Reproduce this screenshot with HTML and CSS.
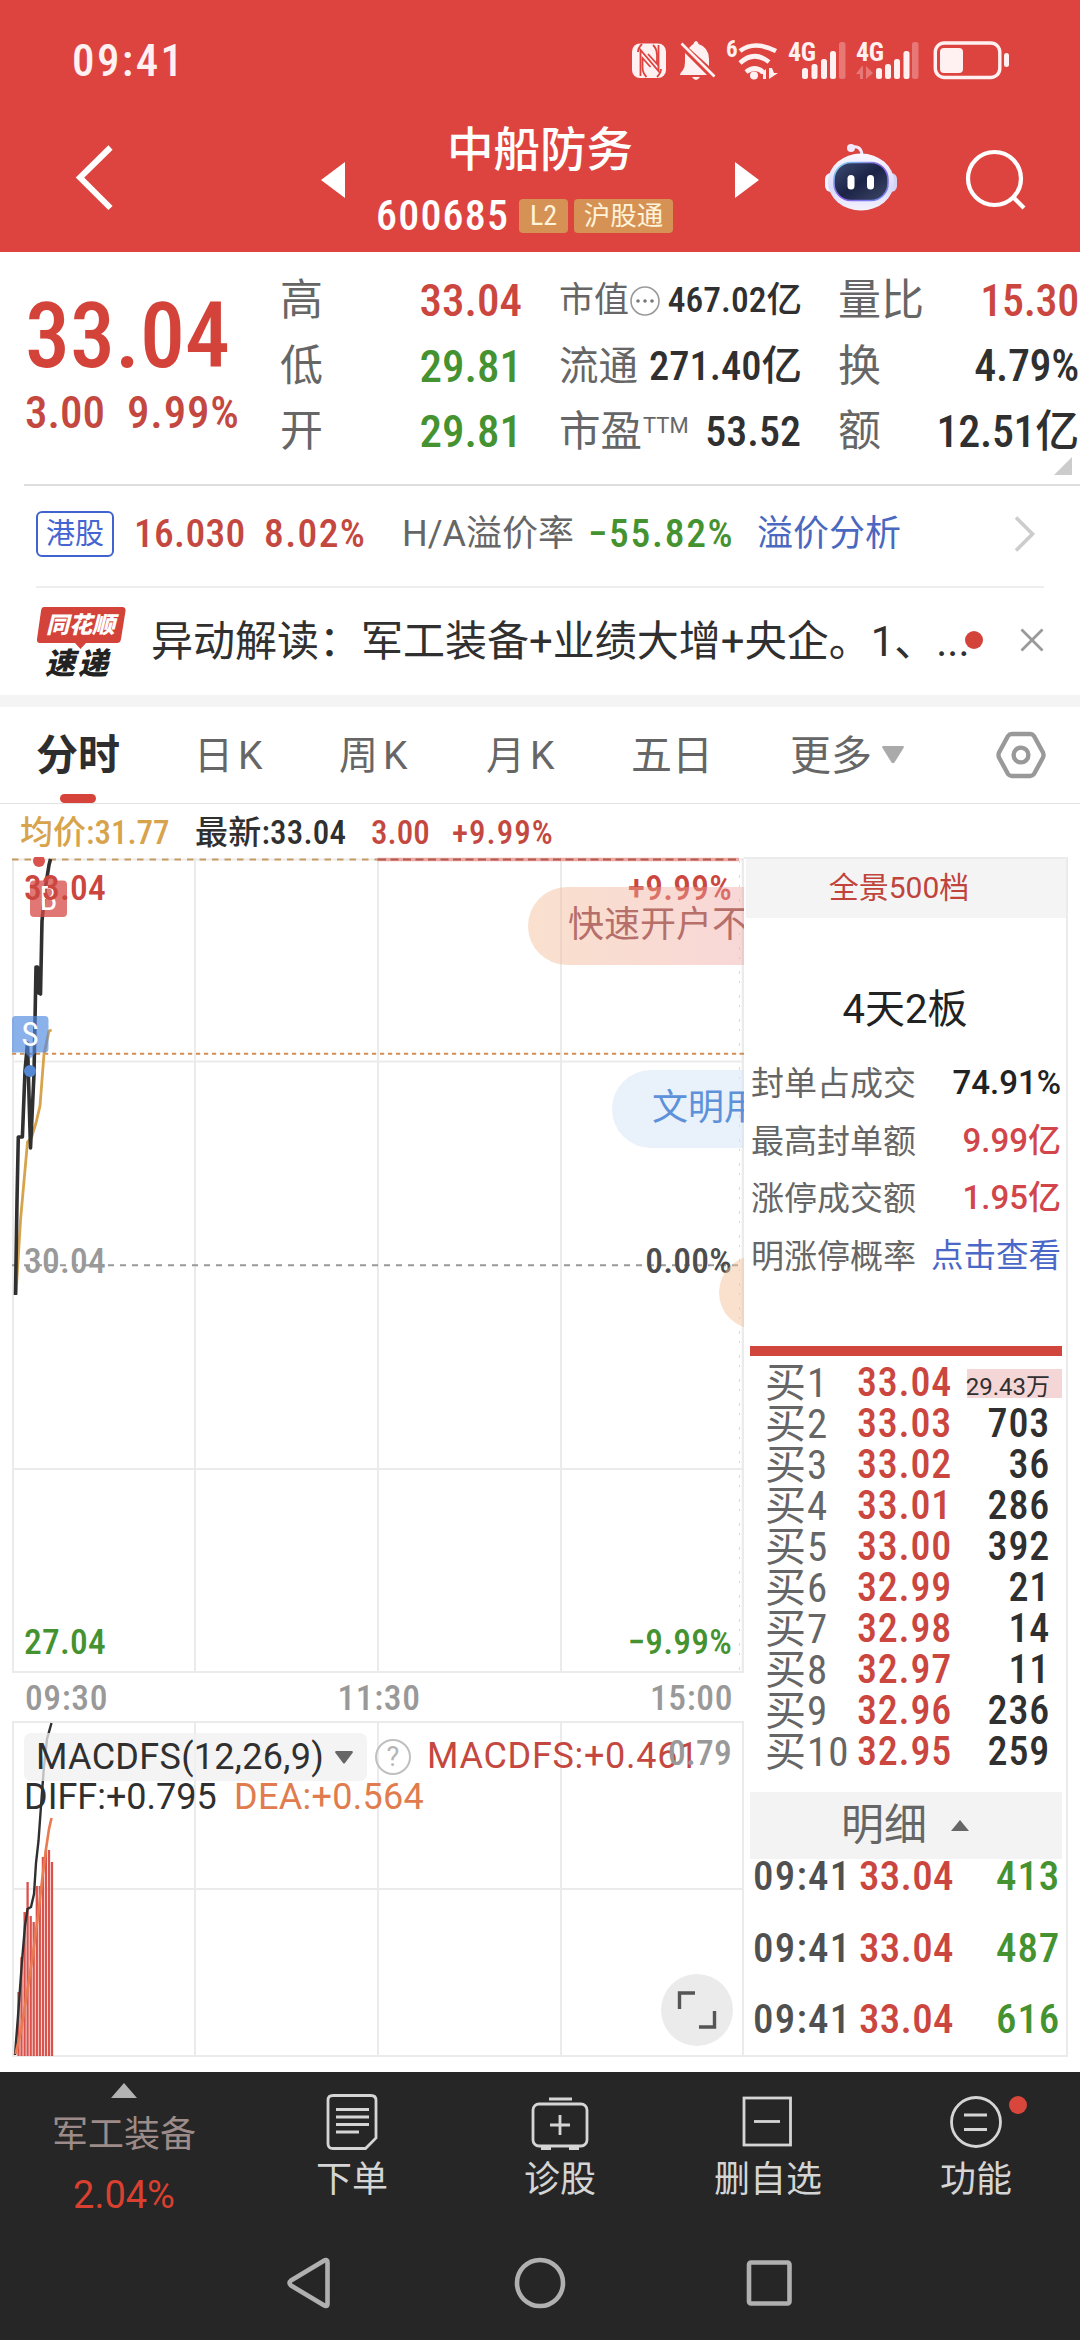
FILE: index.html
```html
<!DOCTYPE html>
<html lang="zh-CN">
<head>
<meta charset="utf-8">
<title>中船防务 600685</title>
<link rel="stylesheet" href="styles.css">
</head>
<body>
<div class="app">
  <header class="top">
    <div class="status">
      <span class="clock">09:41</span>
      <svg class="status-icons" viewBox="628 34 386 50" width="386" height="50" fill="#fff1f1">
        <rect x="632" y="42.500" width="34" height="34.500" rx="8"/>
        <path d="M640.500 75V49l18 21V44M642 43q-4 4-4 8M657 76q4-4 4-8" fill="none" stroke="#dd4440" stroke-width="1.800"/>
        <path d="M648 53l9 10V54q0-6-4-10M650.500 66l-8-9v9q0 6 4 10" fill="none" stroke="#dd4440" stroke-width="1.800"/>
        <path d="M689 47l3-3q2-1 2-2.500 2-3 4 0l.5 1.500q10 3 10.500 15v7zM685 52l22 22h-27q0-2 3-5 2-3 2-8zM692 76h8q-4 6-8 0z"/>
        <path d="M681.500 42.500l33 33" stroke="#fff1f1" stroke-width="2.600"/>
        <text x="726" y="56" class="st6">6</text>
        <g fill="none" stroke="#fff1f1" stroke-width="4.600">
          <path d="M740 50q14-11 36 0M740 62q14-13 29-1M746 71q9-7 17 0"/>
        </g>
        <circle cx="754" cy="74.500" r="4"/>
        <path d="M760 73l6-5v10h-3v-5zM769 67v11l9-6h-4l-2-5z"/>
        <text x="788" y="59.500" class="st4">4G</text>
        <rect x="802" y="67" width="6" height="11" rx="2.500"/><rect x="811.500" y="63" width="6" height="15" rx="2.500"/><rect x="821" y="58" width="6" height="20" rx="2.500"/><rect x="830" y="50" width="6" height="28" rx="2.500"/><rect x="839" y="41" width="6.500" height="37" rx="2.500" opacity=".3"/>
        <text x="856" y="59.500" class="st4">4G</text>
        <path d="M856 73l6-8h1v13h-3v-5zM866 65v13l7-6z" opacity=".3"/>
        <rect x="876" y="67" width="6" height="11" rx="2.500"/><rect x="885" y="63" width="6" height="15" rx="2.500"/><rect x="894" y="58" width="6" height="20" rx="2.500"/><rect x="903.500" y="50" width="6" height="28" rx="2.500"/><rect x="912" y="41" width="6.500" height="37" rx="2.500" opacity=".3"/>
        <rect x="935.300" y="42" width="64.500" height="34.500" rx="9" fill="none" stroke="#fff1f1" stroke-width="3.400"/>
        <rect x="940" y="47" width="23" height="25" rx="4"/>
        <rect x="1004" y="52" width="5" height="14" rx="2.500"/>
      </svg>
    </div>
    <div class="bar">
      <svg class="back" viewBox="75 120 40 116" width="40" height="116"><path d="M110.500 147.500L80 177.500l30.500 30.500" fill="none" stroke="#fff" stroke-width="6"/></svg>
      <svg class="prev" viewBox="0 0 24 116" width="24" height="116"><path d="M24 42v36L0 60z" fill="#fff"/></svg>
      <div class="title">
        <h1>中船防务</h1>
        <div class="code"><span class="code-num">600685</span><span class="badge b1">L2</span><span class="badge b2">沪股通</span></div>
      </div>
      <svg class="next" viewBox="0 0 24 116" width="24" height="116"><path d="M0 42v36l24-18z" fill="#fff"/></svg>
      <svg class="robot" viewBox="823 120 76 116" width="76" height="116">
        <defs>
          <linearGradient id="shell" x1="0" y1="0" x2="0" y2="1"><stop offset="0" stop-color="#fbf8ff"/><stop offset=".6" stop-color="#d9dafa"/><stop offset="1" stop-color="#f4f2ff"/></linearGradient>
          <linearGradient id="visor" x1="0" y1="0" x2="1" y2="1"><stop offset="0" stop-color="#3d4a72"/><stop offset=".5" stop-color="#1b2447"/><stop offset="1" stop-color="#3f4866"/></linearGradient>
          <linearGradient id="rim" x1="0" y1="0" x2="1" y2="1"><stop offset="0" stop-color="#7fe0f4"/><stop offset=".5" stop-color="#8a5be0"/><stop offset="1" stop-color="#6f8df0"/></linearGradient>
        </defs>
        <path d="M852 147q9-2 10 8" fill="none" stroke="#f1ecfb" stroke-width="3"/>
        <circle cx="851" cy="148" r="4" fill="#efe9fb"/>
        <rect x="825" y="173" width="12" height="19" rx="6" fill="#f3f2ff"/><rect x="885" y="173" width="12" height="19" rx="6" fill="#d3d5f6"/>
        <ellipse cx="861" cy="182" rx="33" ry="28.500" fill="url(#shell)"/>
        <rect x="834" y="162.500" width="54" height="38" rx="17" fill="url(#visor)" stroke="url(#rim)" stroke-width="1.600"/>
        <rect x="847.500" y="175" width="7" height="14.500" rx="3.500" fill="#fff"/><rect x="867" y="175" width="7" height="14.500" rx="3.500" fill="#fff"/>
      </svg>
      <svg class="search" viewBox="964 120 64 116" width="64" height="116" fill="none" stroke="#fff" stroke-width="4.200"><circle cx="994.500" cy="178.500" r="26.500"/><path d="M1013 197l11 11"/></svg>
    </div>
  </header>

  <section class="summary">
    <div class="price-box">
      <div class="price">33.04</div>
      <div class="change"><span>3.00</span><span>9.99%</span></div>
    </div>
    <dl class="col c1">
      <div><dt>高</dt><dd class="red">33.04</dd></div>
      <div><dt>低</dt><dd class="green">29.81</dd></div>
      <div><dt>开</dt><dd class="green">29.81</dd></div>
    </dl>
    <dl class="col c2">
      <div class="r1"><dt>市值<svg viewBox="0 0 32 32" width="32" height="32"><circle cx="16" cy="16" r="14" fill="none" stroke="#999" stroke-width="1.600"/><g fill="#777"><circle cx="9" cy="16" r="1.800"/><circle cx="16" cy="16" r="1.800"/><circle cx="23" cy="16" r="1.800"/></g></svg></dt><dd>467.02亿</dd></div>
      <div class="r2"><dt>流通</dt><dd>271.40亿</dd></div>
      <div class="r3"><dt>市盈<span class="ttm">TTM</span></dt><dd>53.52</dd></div>
    </dl>
    <dl class="col c3">
      <div><dt>量比</dt><dd class="red">15.30</dd></div>
      <div><dt>换</dt><dd>4.79%</dd></div>
      <div><dt>额</dt><dd>12.51亿</dd></div>
    </dl>
    <i class="corner"></i>
  </section>

  <section class="hk">
    <span class="hk-tag">港股</span>
    <span class="hk-price">16.030</span>
    <span class="hk-rate">8.02%</span>
    <span class="hk-label">H/A溢价率</span>
    <span class="hk-prem">−55.82%</span>
    <span class="hk-link">溢价分析</span>
    <svg class="hk-go" viewBox="0 0 24 40" width="24" height="40"><path d="M3 3.500L19.500 20 3 36.500" fill="none" stroke="#ccc" stroke-width="3.600"/></svg>
  </section>

  <section class="news">
    <div class="news-logo">
      <svg viewBox="36 603 90 46" width="90" height="46"><path d="M44 604h78q4 0 3.500 4l-4.500 28q-.5 4-4 4H86l-5.500 6-5.500-6H40q-3.500 0-3-4l4-28q.5-4 3-4z" fill="#d3433a"/></svg>
      <b class="nl1">同花顺</b><b class="nl2">速递</b>
    </div>
    <p>异动解读：军工装备+业绩大增+央企。1、...</p>
    <i class="dot"></i>
    <svg class="close" viewBox="0 0 24 24" width="24" height="24"><path d="M1.500 1.500l21 21M22.500 1.500l-21 21" stroke="#999" stroke-width="2.800"/></svg>
  </section>

  <nav class="tabs">
    <a class="on">分时</a><a class="k1">日K</a><a class="k2">周K</a><a class="k3">月K</a><a class="k4">五日</a><a class="k5">更多</a>
    <svg class="more" viewBox="0 0 22 18" width="22" height="18"><path d="M1 0h20q1.500.5.500 2L12.500 16.500q-1.500 1.500-3 0L.5 2Q-.5.500 1 0z" fill="#aaa"/></svg>
    <svg class="hex" viewBox="0 0 50 48" width="50" height="48" fill="none" stroke="#999" stroke-width="4.400" stroke-linejoin="round"><path d="M15.500 3h19q2 0 3.500 2l9 16.500q1 2.500 0 5L38 43q-1.500 2-3.500 2h-19q-2 0-3.500-2L3 26.500q-1-2.500 0-5L12 5q1.500-2 3.500-2z"/><circle cx="25" cy="24" r="7.400"/></svg>
  </nav>

  <div class="info"><span class="gold">均价:31.77</span><span class="latest">最新:33.04</span><span class="d1">3.00</span><span class="d2">+9.99%</span></div>

  <main class="board">
    <div class="charts">
      <div class="pane price-pane">
        <svg viewBox="0 856 744 816" width="744" height="816" fill="none">
          <g stroke="#ebebeb" stroke-width="2">
            <path d="M12 858.500h732M12 1060.500h732M12 1468h732M12 1671h732M13 857v815M195 857v815M378 857v815M561 857v815"/>
            <path d="M743 857v815" stroke-width="2.500"/>
          </g>
          <path d="M377 858.500h362" stroke="#e9a8a4" stroke-width="3.500"/>
          <path d="M12 858.500h366" stroke="#c79c63" stroke-width="2" stroke-dasharray="6.500 6"/>
          <path d="M378 858.500h362" stroke="#b45a4c" stroke-width="2" stroke-dasharray="8 4.500"/>
          <path d="M12 1052.800h732" stroke="#d08f58" stroke-width="2" stroke-dasharray="4.200 3.800"/>
          <path d="M12 1264.300h728" stroke="#999" stroke-width="2" stroke-dasharray="6 6"/>
          <path d="M739.500 860v811" stroke="#f0cfd2" stroke-width="1" stroke-dasharray="2 12 3 7"/>
          <path d="M16 1293L20.600 1218L27.500 1141L31.700 1136L36 1122L40 1105L44 1053L49 1030L51.600 1029" stroke="#d7a34c" stroke-width="2.800"/>
          <path d="M15.500 1294L17 1200L18.300 1136H22.400L25 1070L27.500 1042L30.500 1147L34 1073L36 966L37.500 966L38.500 992L40.500 993L42 920L45 889L49 864L50.500 858" stroke="#303030" stroke-width="3.600" stroke-linejoin="round"/>
          <circle cx="39" cy="860" r="6" fill="#d9534c"/>
          <g fill="#d64a45" fill-opacity=".75"><path d="M34 879.500h9l5.500-5 5.500 5h9q4 0 4 4v28.500q0 4-4 4H34q-4 0-4-4v-28.500q0-4 4-4z"/></g>
          <text x="48.500" y="908.500" class="mark">B</text>
          <path d="M15 1015h30q3.500 0 3.500 4v28.500q0 4-4 4H36l-5.500 6-5.500-6H12V1019q0-4 3-4z" fill="#4f89e0" fill-opacity=".66"/>
          <circle cx="30" cy="1070" r="6" fill="#5588d3"/>
          <text x="30" y="1044.500" class="mark">S</text>
        </svg>
        <span class="lab tl red">33.04</span><span class="lab tr red">+9.99%</span>
        <span class="lab ml">30.04</span><span class="lab mr">0.00%</span>
        <span class="lab bl green">27.04</span><span class="lab br green">−9.99%</span>
        <span class="pill p1">快速开户不</span><span class="pill p2">文明用</span><span class="pill p3"></span>
      </div>
      <div class="times"><span>09:30</span><span>11:30</span><span>15:00</span></div>
      <div class="pane macd-pane">
        <svg viewBox="0 1720 744 336" width="744" height="336" fill="none">
          <path d="M12 1721h732M12 1888h732M12 2055h732M13 1720v336M195 1720v336M378 1720v336M561 1720v336M743 1720v336" stroke="#ebebeb" stroke-width="2"/>
          <path d="M18.500 2055V1991M21.500 2055V1956M24.600 2055V1911M27.600 2055V1881M30.700 2055V1915M33.700 2055V1921M36.800 2055V1885M39.800 2055V1885M42.900 2055V1856M45.900 2055V1849M49 2055V1849M52 2055V1861" stroke="#d9534c" stroke-width="2.300"/>
          <path d="M15 2054L18 2015L22 1960L25 1925L27.500 1908L31 1906L34 1893L36 1862L38.500 1840L41 1805L44 1765L47 1738L51.500 1722" stroke="#303030" stroke-width="2.400"/>
          <path d="M15.500 2053L21 2030L27 1992L33 1953L38 1915L42 1880L46 1848L49 1828L51.500 1817" stroke="#e97b50" stroke-width="2.600"/>
        </svg>
        <div class="macd-head">
          <span class="macd-btn">MACDFS(12,26,9)<svg viewBox="0 0 18 13" width="18" height="13"><path d="M1 0h16q1.500.5.500 2L10 12q-1 1-2 0L.5 2Q-.5.500 1 0z" fill="#666"/></svg></span>
          <span class="help">?</span>
          <span class="macd-val">MACDFS:+0.461</span>
        </div>
        <div class="macd-sub"><span class="diff">DIFF:+0.795</span><span class="dea">DEA:+0.564</span></div>
        <span class="lab scale">0.79</span>
        <span class="expand"><svg viewBox="0 0 40 40" width="40" height="40"><path d="M2.500 19V3H18M37.500 21v16H22" fill="none" stroke="#555" stroke-width="3.400"/></svg></span>
      </div>
    </div>
    <aside class="side">
      <div class="depth">全景500档</div>
      <div class="streak">4天2板</div>
      <ul class="facts">
        <li><span>封单占成交</span><b>74.91%</b></li>
        <li><span>最高封单额</span><b class="r">9.99亿</b></li>
        <li><span>涨停成交额</span><b class="r">1.95亿</b></li>
        <li><span>明涨停概率</span><b class="l">点击查看</b></li>
      </ul>
      <div class="redline"></div>
      <ul class="bids">
        <li><span>买1</span><em>33.04</em><b class="hot">29.43万</b></li>
        <li><span>买2</span><em>33.03</em><b>703</b></li>
        <li><span>买3</span><em>33.02</em><b>36</b></li>
        <li><span>买4</span><em>33.01</em><b>286</b></li>
        <li><span>买5</span><em>33.00</em><b>392</b></li>
        <li><span>买6</span><em>32.99</em><b>21</b></li>
        <li><span>买7</span><em>32.98</em><b>14</b></li>
        <li><span>买8</span><em>32.97</em><b>11</b></li>
        <li><span>买9</span><em>32.96</em><b>236</b></li>
        <li><span>买10</span><em>32.95</em><b>259</b></li>
      </ul>
      <div class="detail">明细<i></i></div>
      <ul class="ticks">
        <li><span>09:41</span><em>33.04</em><b>413</b></li>
        <li><span>09:41</span><em>33.04</em><b>487</b></li>
        <li><span>09:41</span><em>33.04</em><b>616</b></li>
      </ul>
    </aside>
  </main>

  <footer class="bottom">
    <div class="actions">
      <div class="sector"><i></i><span>军工装备</span><b>2.04%</b></div>
      <div class="act"><svg viewBox="0 0 60 60" width="60" height="60" fill="none" stroke="#d5d5d5" stroke-width="2.800"><path d="M11 4.500h38q5 0 5 5v37.500L43.500 57.500H11q-5 0-5-5V9.500q0-5 5-5z"/><path d="M14 18.500h33M14 26h33M14 33.500h33M14 41h23"/></svg><span>下单</span></div>
      <div class="act"><svg viewBox="0 0 60 60" width="60" height="60" fill="none" stroke="#d5d5d5" stroke-width="2.800"><rect x="3" y="13" width="54" height="42" rx="6"/><path d="M19 8h23M30 24v20M20 34h20" /><path d="M11 57h10M39 57h10" stroke-width="4"/></svg><span>诊股</span></div>
      <div class="act"><svg viewBox="0 0 60 60" width="60" height="60" fill="none" stroke="#d5d5d5" stroke-width="2.800"><rect x="6" y="7" width="46.500" height="47"/><path d="M16 30.500h26"/></svg><span>删自选</span></div>
      <div class="act"><svg viewBox="0 0 60 60" width="60" height="60" fill="none" stroke="#d5d5d5" stroke-width="2.800"><circle cx="30" cy="31" r="24.500"/><path d="M18 24h23M18 38.500h23"/></svg><span>功能</span><i class="alert"></i></div>
    </div>
    <svg class="sysnav" viewBox="0 2237 1080 90" width="1080" height="90" fill="none" stroke="#b0b0b0" stroke-width="4.600" stroke-linejoin="round"><path d="M327.500 2261.500v41q0 4-4 1.500l-32.500-19.500q-3-2.500 0-5l32.500-19.500q4-2.500 4 1.500z"/><circle cx="540" cy="2282" r="23"/><rect x="749" y="2261.500" width="40.500" height="41" rx="2"/></svg>
  </footer>
</div>
</body>
</html>
```
FILE: styles.css
```css
* { box-sizing: border-box; margin: 0; padding: 0; }
body { background: #fff; }
.app {
  width: 1080px; height: 2340px; overflow: hidden;
  font-family: Roboto, "Noto Sans CJK SC", sans-serif;
  font-stretch: 78%; color: #303030; white-space: nowrap;
}
.app svg { display: block; flex: none; }
ul { list-style: none; }
em, i { font-style: normal; }
.red { color: #cb463e; }
.green { color: #459231; }

/* status bar and title */
.top { height: 252px; background: #dd4440; color: #fff; }
.status { height: 120px; display: flex; align-items: center; justify-content: space-between; padding: 0 66px 0 72px; }
.clock { font-size: 45px; font-weight: 500; letter-spacing: 2.400px; color: #fff1f1; }
.st4 { font-size: 26px; font-weight: 700; letter-spacing: -.3px; }
.st6 { font-size: 23px; font-weight: 700; }
.bar { height: 132px; display: flex; align-items: flex-start; }
.back { margin-left: 75px; }
.prev { margin-left: 206px; }
.title { width: 390px; }
.title h1 { height: 58px; line-height: 61px; font-size: 46.500px; font-weight: 500; text-align: center; }
.code { height: 74px; padding: 1px 0 0 31px; display: flex; align-items: center; }
.code-num { font-size: 42px; font-weight: 500; letter-spacing: 1.200px; width: 143px; }
.badge { height: 34px; line-height: 33px; border-radius: 4px; background: #d69254; color: #fff4da; font-size: 26.500px; text-align: center; }
.b1 { width: 49px; margin-right: 6px; font-size: 28px; }
.b2 { width: 99px; }
.robot { margin-left: 64px; }
.search { margin-left: 65px; }

/* quote summary */
.summary { position: relative; height: 232px; display: flex; }
.price-box { width: 280px; padding-left: 25px; color: #d3433a; }
.price { height: 90px; margin-top: 40px; line-height: 90px; font-size: 90px; font-weight: 500; }
.change { height: 50px; margin-top: 4px; line-height: 53px; display: flex; gap: 22px; font-size: 45px; font-weight: 500; color: #c4483f; }
.change span + span { letter-spacing: .8px; }
.col { padding-top: 16px; }
.col > div { height: 65.500px; display: flex; align-items: center; justify-content: space-between; line-height: 1; }
.col dt { font-size: 43px; color: #666; display: flex; align-items: center; }
.col dd { font-size: 45px; font-weight: 500; }
.c1 { width: 242px; }
.c2 { width: 243px; margin-left: 37px; }
.c3 { width: 241px; margin-left: 36px; }
.c3 dd { font-size: 44px; letter-spacing: -.3px; }
.c2 .r1 dt { font-size: 35px; }
.c2 .r1 dd { font-size: 35.500px; }
.c2 .r2 dt { font-size: 39.500px; }
.c2 .r2 dd { font-size: 40.500px; }
.c2 .r3 dt { font-size: 41.500px; }
.c2 .r3 dd { font-size: 42px; margin-right: 1px; }
.ttm { font-size: 22px; font-stretch: 100%; line-height: 24px; align-self: flex-start; margin: 3px 0 0 1px; }
.corner { position: absolute; right: 8px; bottom: 9px; border-style: solid; border-width: 0 0 18px 18px; border-color: transparent transparent #ccc transparent; }

/* Hong Kong listing */
.hk { height: 102px; margin-left: 24px; padding: 0 0 4px 12px; border-top: 2px solid #dedede; display: flex; align-items: center; line-height: 1; }
.hk-tag { width: 78px; height: 46px; line-height: 43px; border: 2px solid #4163cf; border-radius: 6px; color: #4566d2; font-size: 29px; text-align: center; }
.hk-price, .hk-rate { font-size: 39.500px; font-weight: 500; color: #c4483f; }
.hk-price { width: 130px; margin-left: 20px; letter-spacing: .3px; }
.hk-rate { width: 138px; letter-spacing: 1.400px; }
.hk-label { width: 186px; font-size: 36px; font-stretch: 100%; color: #666; }
.hk-prem { width: 169px; font-size: 39.500px; font-weight: 500; letter-spacing: 1.700px; color: #459231; }
.hk-link { width: 256px; font-size: 36px; color: #4a68c0; }

/* news line */
.news { height: 109px; margin: 0 36px; border-top: 2px solid #eee; display: flex; align-items: center; }
.news-logo { width: 115px; height: 72px; position: relative; }
.nl1, .nl2 { position: absolute; font-weight: 900; font-style: italic; }
.nl1 { left: 10px; top: 2px; font-size: 23px; line-height: 35px; color: #fff; }
.nl2 { left: 9px; top: 42px; font-size: 30px; line-height: 32px; letter-spacing: 3px; color: #222; }
.news p { width: 813px; font-size: 42px; line-height: 1; font-stretch: 90%; }
.dot { width: 18px; height: 18px; border-radius: 50%; background: #d3433a; margin: -3px 37px 0 1px; }
.close { margin-top: -3px; }

/* chart tabs */
.tabs { height: 109px; border-top: 12px solid #f4f4f4; border-bottom: 1px solid #e3e3e3; display: flex; align-items: center; font-size: 41px; font-stretch: 100%; color: #666; }
.tabs a { flex: none; height: 96px; line-height: 98px; }
.tabs .on { position: relative; margin-left: 36px; width: 158px; font-size: 42px; font-weight: 700; color: #2e2e2e; }
.tabs .on::after { content: ""; position: absolute; left: 24px; bottom: 0; width: 36px; height: 9px; border-radius: 5px; background: #d5433a; }
.k1 { width: 145px; } .k2 { width: 147px; } .k3 { width: 145px; } .k4 { width: 159px; } .k5 { width: 92px; }
.k1, .k2, .k3 { letter-spacing: 5px; font-size: 39px; }
.hex { margin-left: 92px; }

.info { height: 53px; padding-left: 20px; line-height: 57px; display: flex; font-size: 33px; font-weight: 500; }
.info .gold { width: 175px; color: #d7a34c; }
.info .latest { width: 176px; letter-spacing: .2px; }
.info .d1 { width: 81px; color: #c4483f; }
.info .d2 { color: #c4483f; letter-spacing: 1px; }

/* chart and order book */
.board { height: 1215px; display: flex; align-items: flex-start; }
.charts { width: 744px; }
.pane { position: relative; overflow: hidden; }
.price-pane { height: 816px; }
.mark { font-size: 33px; fill: #fff; text-anchor: middle; }
.lab { position: absolute; line-height: 36px; font-size: 35.500px; font-weight: 500; letter-spacing: .2px; }
.tl, .ml, .bl { left: 24px; }
.tr, .mr, .br, .scale { right: 12px; }
.tr, .br { font-stretch: 85%; }
.mr { font-stretch: 82%; }
.tl, .tr { top: 13px; }
.ml, .mr { top: 386px; }
.bl, .br { top: 767px; }
.ml { color: #999; }
.mr { color: #4d4d4d; }
.pill { position: absolute; height: 78px; line-height: 77px; border-radius: 39px 0 0 39px; font-size: 36px; opacity: .92; overflow: hidden; }
.p1 { left: 528px; top: 30px; width: 216px; padding-left: 40px; color: #b0635d; background: linear-gradient(90deg, rgba(244,190,150,.5), rgba(240,160,160,.45)); }
.p2 { left: 612px; top: 213px; width: 132px; padding-left: 40px; color: #5088d6; background: rgba(213,228,248,.55); }
.p3 { left: 719px; top: 399px; width: 78px; height: 73px; border-radius: 39px; background: rgba(244,190,150,.5); }
.times { height: 48px; padding: 0 11px 0 25px; display: flex; justify-content: space-between; line-height: 50px; font-size: 35.500px; font-weight: 500; color: #999; letter-spacing: .6px; }
.macd-pane { height: 336px; }
.macd-head { position: absolute; left: 24px; top: 12px; height: 48px; display: flex; align-items: center; font-size: 36px; font-stretch: 94%; }
.macd-btn { width: 343px; height: 48px; padding: 0 14px 0 12px; line-height: 48px; border-radius: 7px; background: rgba(240,240,240,.75); display: flex; align-items: center; justify-content: space-between; letter-spacing: .3px; }
.help { width: 36px; height: 36px; line-height: 33px; margin: 0 16px 0 8px; border: 2px solid #c0c0c0; border-radius: 50%; font-size: 27px; text-align: center; color: #b5b5b5; }
.macd-val { color: #c4483f; line-height: 46px; height: 48px; letter-spacing: .7px; }
.macd-sub { position: absolute; left: 24px; top: 58px; line-height: 36px; display: flex; font-size: 36px; font-stretch: 88%; }
.diff { width: 210px; }
.dea { color: #e07c4d; letter-spacing: .3px; }
.scale { top: 14px; color: #999; }
.expand { position: absolute; right: 11px; bottom: 11px; width: 72px; height: 72px; border-radius: 50%; background: #ebebeb; display: flex; align-items: center; justify-content: center; }

.side { width: 324px; height: 1200px; border: 2px solid #ebebeb; border-left: 0; }
.depth { height: 59px; line-height: 57px; margin-left: 2px; background: #f4f4f4; text-align: center; padding-right: 14px; font-size: 30px; font-stretch: 100%; color: #c0443c; }
.streak { height: 137px; padding-top: 62px; line-height: 59px; text-align: center; font-size: 40px; font-stretch: 100%; color: #222; }
.facts { padding: 0 5px 0 7px; }
.facts li { height: 57.600px; line-height: 1; display: flex; justify-content: space-between; align-items: center; font-size: 33px; color: #666; }
.facts b { font-weight: 500; color: #222; font-stretch: 97%; padding-bottom: 2px; }
.facts .r { color: #d2454a; }
.facts .l { font-weight: 400; font-size: 32.500px; color: #4a68c8; padding: 0; }
.redline { height: 10px; margin: 61px 4px 5.500px 6px; background: #d0453c; }
.bids { height: 410px; }
.bids li { height: 41px; line-height: 42px; padding: 0 4px 0 21px; display: grid; grid-template-columns: 92px 110px 95px; font-size: 41px; }
.bids span { color: #666; letter-spacing: 1px; font-stretch: 84%; }
.bids em { font-size: 40px; font-weight: 500; color: #cb463e; letter-spacing: .8px; }
.bids b { font-size: 40px; font-weight: 500; text-align: right; padding-right: 12px; letter-spacing: .8px; }
.bids .hot { font-size: 24px; font-weight: 400; font-stretch: 100%; letter-spacing: 0; height: 29px; line-height: 36px; margin-top: 7px; background: #f5d6d7; text-indent: -8px; }
.detail { height: 67px; line-height: 1; margin: 20.500px 4px 0 6px; background: #f3f3f3; display: flex; align-items: center; padding-left: 91px; font-size: 43px; color: #666; }
.detail i { margin-left: 24px; border: solid transparent; border-width: 0 9px 11px; border-bottom-color: #666; }
.ticks { padding: 0 6px 0 9px; display: grid; row-gap: 37.300px; }
.ticks li { height: 34px; line-height: 35px; display: grid; grid-template-columns: 106px 95px 1fr; font-size: 41px; font-weight: 500; }
.ticks span { color: #505050; letter-spacing: 1.200px; }
.ticks em { color: #cb463e; letter-spacing: .3px; }
.ticks b { font-weight: 500; color: #459231; text-align: right; letter-spacing: .8px; }

/* bottom bar */
.bottom { height: 269px; background: #262626; color: #d5d5d5; }
.actions { height: 166px; display: grid; grid-template-columns: 248px repeat(4, 208px); }
.sector { display: flex; flex-direction: column; align-items: center; color: #9c8b88; font-size: 36px; line-height: 42px; padding-top: 11px; }
.sector i { border: solid transparent; border-width: 0 13px 15px; border-bottom-color: #b3b3b3; }
.sector span { margin-top: 16px; }
.sector b { margin-top: 18px; font-size: 38px; font-weight: 400; font-stretch: 97%; color: #d9402f; }
.act { position: relative; display: flex; flex-direction: column; align-items: center; font-size: 36px; line-height: 42px; padding-top: 19px; }
.act span { margin-top: 8px; }
.alert { position: absolute; left: 137px; top: 24px; width: 18px; height: 18px; border-radius: 50%; background: #d9463b; }
```
